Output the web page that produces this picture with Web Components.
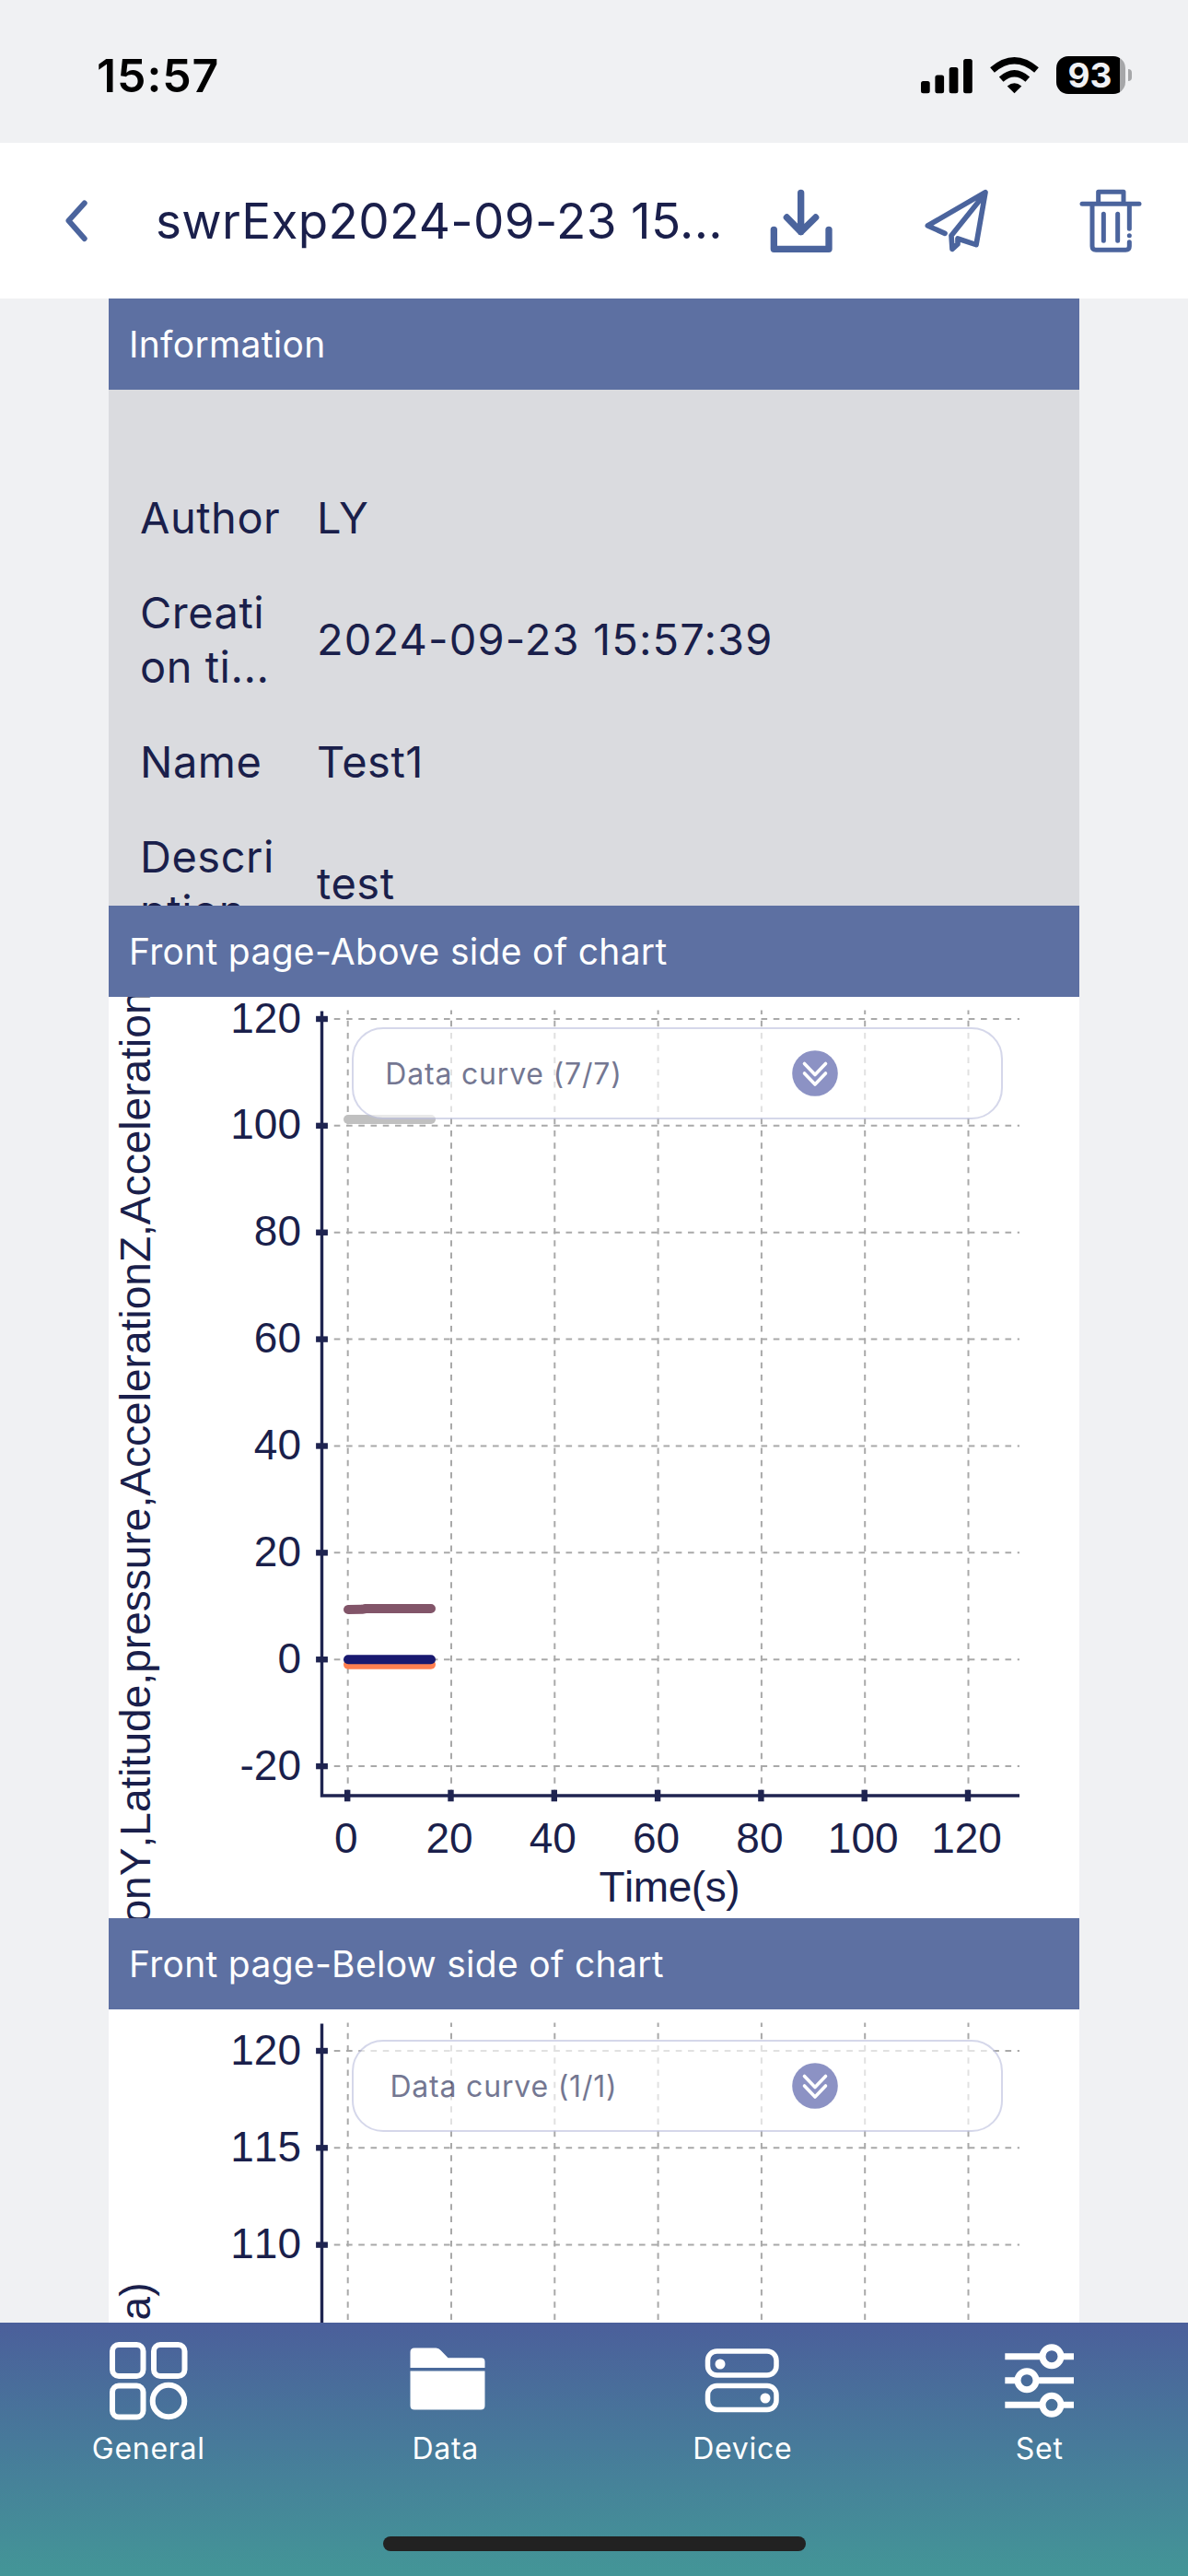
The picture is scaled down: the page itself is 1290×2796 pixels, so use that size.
<!DOCTYPE html>
<html lang="en">
<head>
<meta charset="utf-8">
<title>Experiment record</title>
<style>
  html, body {
    margin: 0;
    padding: 0;
  }
  body {
    width: 1290px;
    height: 2796px;
    overflow: hidden;
    display: flex;
    flex-direction: column;
    background: #f0f1f3;
    color: #1a1f4b;
    font-family: Inter, "Liberation Sans", sans-serif;
  }
  main {
    flex: 1;
    min-height: 0;
    overflow: hidden;
    padding: 0 118px;
  }
</style>
</head>
<body>
  <status-bar time="15:57" battery="93"></status-bar>
  <page-header>swrExp2024-09-23 15...</page-header>

  <main>
    <section-panel heading="Information" style="--body-height: 560px; --body-color: #dadbdf">
      <info-list>
        <info-row style="--value-spacing: -1px"><span slot="label">Author</span>LY</info-row>
        <info-row style="--value-spacing: 1.1px"><span slot="label">Creati<br>on ti...</span>2024-09-23 15:57:39</info-row>
        <info-row><span slot="label">Name</span>Test1</info-row>
        <info-row><span slot="label">Descri<br>ption</span>test</info-row>
      </info-list>
    </section-panel>

    <section-panel heading="Front page-Above side of chart">
      <data-chart id="above">
        <curve-legend>Data curve (7/7)</curve-legend>
      </data-chart>
    </section-panel>

    <section-panel heading="Front page-Below side of chart">
      <data-chart id="below">
        <curve-legend>Data curve (1/1)</curve-legend>
      </data-chart>
    </section-panel>
  </main>

  <tab-bar>
    <tab-item label="General">
      <svg width="86" height="86" viewBox="0 0 86 86" fill="none" stroke="#fff" stroke-width="6">
        <rect x="4" y="4" width="33.5" height="34" rx="7"/>
        <rect x="49" y="4" width="33.5" height="34" rx="7"/>
        <rect x="4" y="48.5" width="33.5" height="34" rx="7"/>
        <circle cx="65" cy="65" r="17.3"/>
      </svg>
    </tab-item>
    <tab-item label="Data">
      <svg width="86" height="86" viewBox="0 0 86 86" fill="#fff">
        <path d="M4.500 29V12Q4.500 7.500 9 7.500H32.500Q35.500 7.500 37.500 10L45.500 18.300H81.500Q85.500 18.300 85.500 22.500V29Z"/>
        <path d="M4.500 32.500H85.500V70Q85.500 74.500 81 74.500H9Q4.500 74.500 4.500 70Z"/>
      </svg>
    </tab-item>
    <tab-item label="Device">
      <svg width="86" height="86" viewBox="0 0 86 86" fill="none" stroke="#fff" stroke-width="5.500">
        <rect x="5.500" y="11" width="74.500" height="26" rx="10"/>
        <rect x="5.500" y="48.500" width="74.500" height="26" rx="10"/>
        <circle cx="19" cy="25" r="5.500" fill="#fff" stroke="none"/>
        <circle cx="68" cy="62" r="5.500" fill="#fff" stroke="none"/>
      </svg>
    </tab-item>
    <tab-item label="Set">
      <svg width="86" height="86" viewBox="0 0 86 86" fill="none" stroke="#fff" stroke-width="7">
        <path d="M5.300 16.700H46M66 16.700H80M5.300 42.700H19M39 42.700H80M5.300 69.300H46M66 69.300H80"/>
        <circle cx="56" cy="16.700" r="10"/>
        <circle cx="29" cy="42.700" r="10"/>
        <circle cx="56" cy="69.300" r="10"/>
      </svg>
    </tab-item>
  </tab-bar>

<script>
"use strict";

// Attach an open shadow root filled from an HTML string
function render(host, html) {
  const shadow = host.attachShadow({ mode: 'open' });
  const template = document.createElement('template');
  template.innerHTML = html;
  shadow.appendChild(template.content.cloneNode(true));
  return shadow;
}

class StatusBar extends HTMLElement {
  connectedCallback() {
    render(this, `
      <style>
        :host {
          display: flex;
          flex: none;
          justify-content: space-between;
          align-items: flex-start;
          box-sizing: border-box;
          height: 155px;
          padding: 52px 61px 0 105px;
          color: #000;
        }
        .time {
          font-size: 50px;
          line-height: 61px;
          font-weight: 600;
          letter-spacing: 0.900px;
        }
        .icons { display: flex; align-items: center; gap: 19px; height: 59px; }
        .battery { display: flex; align-items: center; gap: 3px; }
        .level {
          width: 75px;
          height: 41.500px;
          border-radius: 13px;
          background: linear-gradient(90deg, #000 92%, #a6a7a9 92%);
          color: #f0f1f4;
          font-size: 37px;
          font-weight: 700;
          line-height: 41px;
          text-align: center;
          text-indent: -1px;
        }
        .cap {
          width: 4.500px;
          height: 13px;
          border-radius: 0 5px 5px 0;
          background: #a6a7a9;
        }
      </style>
      <div class="time">${this.getAttribute('time')}</div>
      <div class="icons">
        <svg width="56" height="40" viewBox="0 0 56 40">
          <rect x="0" y="26" width="9.700" height="13.300" rx="2.500"/>
          <rect x="15.400" y="19.500" width="9.700" height="19.800" rx="2.500"/>
          <rect x="30.700" y="11" width="9.700" height="28.300" rx="2.500"/>
          <rect x="46.100" y="2" width="9.700" height="37.300" rx="2.500"/>
        </svg>
        <svg width="53" height="40" viewBox="0 0 53 40">
          <path d="M26.500 39.300L18.700 31.500Q26.500 25 34.300 31.500Z"/>
          <path d="M12.200 24.200Q26.500 11.300 40.800 24.200" fill="none" stroke="#000" stroke-width="7"/>
          <path d="M2.500 14Q26.500 -6.500 50.500 14" fill="none" stroke="#000" stroke-width="7.200"/>
        </svg>
        <div class="battery">
          <div class="level">${this.getAttribute('battery')}</div>
          <div class="cap"></div>
        </div>
      </div>
    `);
  }
}

class PageHeader extends HTMLElement {
  connectedCallback() {
    render(this, `
      <style>
        :host {
          display: flex;
          flex: none;
          align-items: center;
          box-sizing: border-box;
          height: 169px;
          padding: 0 50px 0 69.500px;
          background: #fff;
        }
        .title {
          flex: 1;
          padding-left: 73.500px;
          font-size: 53px;
          line-height: 64px;
          letter-spacing: 0.350px;
          white-space: nowrap;
        }
        svg { flex: none; fill: none; stroke: #4b649d; stroke-linecap: round; stroke-linejoin: round; }
        .actions { display: flex; gap: 99.500px; align-items: center; }
      </style>
      <svg width="26" height="46" viewBox="0 0 26 46" stroke-width="6">
        <path d="M21.700 3.500L4.500 22.500L21.700 42"/>
      </svg>
      <div class="title"><slot></slot></div>
      <div class="actions">
        <svg width="68" height="70" viewBox="169 74 204 210" stroke-width="22">
          <path d="M270 87V214M224 167L270 214L318 167M182 207V270H361V207"/>
        </svg>
        <svg width="69" height="70" viewBox="672 74 207 210" stroke-width="17">
          <path d="M738 219L682 194L870 85L840 256L780 236V254L762 270L759 226L860 100"/>
        </svg>
        <svg width="68" height="70" viewBox="1175 74 204 210" stroke-width="15">
          <path d="M1184 123H1370M1237 120V84H1319V120M1254 156V243M1300 156V243"/>
          <path d="M1338 126V204M1338 226V226.100M1338 247V261Q1338 273 1326 273H1229Q1217 273 1217 261V126"/>
        </svg>
      </div>
    `);
  }
}

class SectionPanel extends HTMLElement {
  connectedCallback() {
    render(this, `
      <style>
        :host { display: block; }
        h2 {
          margin: 0;
          height: 99px;
          padding-left: 22px;
          background: #5d70a2;
          color: #fff;
          font-size: 39px;
          font-weight: 400;
          line-height: 99px;
          letter-spacing: 0.300px;
        }
        .body {
          height: var(--body-height, 1000px);
          background: var(--body-color, #fff);
          overflow: hidden;
        }
      </style>
      <h2>${this.getAttribute('heading')}</h2>
      <div class="body"><slot></slot></div>
    `);
  }
}

class InfoList extends HTMLElement {
  connectedCallback() {
    render(this, `
      <style>
        :host { display: flex; flex-direction: column; padding: 72px 34px 0; }
      </style>
      <slot></slot>
    `);
  }
}

class InfoRow extends HTMLElement {
  connectedCallback() {
    render(this, `
      <style>
        :host {
          display: grid;
          grid-template-columns: 192px 1fr;
          align-items: center;
          height: 132.500px;
          font-size: 47px;
          line-height: 59px;
          white-space: nowrap;
        }
        .label { letter-spacing: 0.500px; }
        .value { letter-spacing: var(--value-spacing, 0.500px); }
      </style>
      <div class="label"><slot name="label"></slot></div>
      <div class="value"><slot></slot></div>
    `);
  }
}

class CurveLegend extends HTMLElement {
  connectedCallback() {
    render(this, `
      <style>
        /* floats over the plot area */
        :host {
          position: absolute;
          left: 264px;
          top: 33px;
          display: grid;
          grid-template-columns: 326px 1fr;
          align-items: center;
          box-sizing: border-box;
          width: 707px;
          height: 100px;
          border: 2px solid #bfc3e0;
          border-radius: 34px;
          background: #fff;
          opacity: 0.65;
        }
        .text {
          padding-top: 2px;
          text-align: center;
          font-size: 32px;
          line-height: 40px;
          letter-spacing: 0.800px;
          color: #2a2f58;
          white-space: nowrap;
        }
        svg { display: block; justify-self: start; margin-left: 150px; }
      </style>
      <div class="text"><slot></slot></div>
      <svg width="50" height="50" viewBox="0 0 50 50">
        <circle cx="25" cy="25" r="24.800" fill="#5059a5"/>
        <path d="M13.500 14.500L25 26.500L36.500 14.500M13.500 25L25 37L36.500 25" fill="none" stroke="#fff"
          stroke-width="3.600" stroke-linecap="round" stroke-linejoin="round"/>
      </svg>
    `);
  }
}

const charts = {
  above: {
    yLabel: 'onY,Latitude,pressure,AccelerationZ,Acceleration',
    yLabelStart: 1005.5,
    yLabelLength: 1012,
    yTicks: [120, 100, 80, 60, 40, 20, 0, -20],
    yTop: 24,
    yStep: 115.87,
    series: [
      { color: '#c0c0c0', d: 'M260 133H350' },
      { color: '#825569', d: 'M260 665L275 664.800L279 664H350' },
      { color: '#ff7f50', d: 'M260 724.800H350' },
      { color: '#191970', d: 'M260 719.300H350' }
    ]
  },
  below: {
    yLabel: 'a)',
    yLabelStart: 337.5,
    yLabelLength: 41,
    yTicks: [120, 115, 110],
    yTop: 45,
    yStep: 105.3,
    series: []
  }
};

class DataChart extends HTMLElement {
  connectedCallback() {
    const chart = charts[this.id];
    const left = 231.5;
    const bottom = 867;
    const right = 989;
    const xTicks = [0, 20, 40, 60, 80, 100, 120];
    const xPos = i => 259.7 + i * 112.3;
    const yPos = i => chart.yTop + i * chart.yStep;

    let grid = '';
    let ticks = '';
    let labels = '';
    xTicks.forEach((value, i) => {
      const x = xPos(i);
      grid += `<path d="M${x} ${bottom}V14.500"/>`;
      ticks += `<rect x="${x - 3.7}" y="${bottom - 6.3}" width="6.400" height="12.600"/>`;
      labels += `<text x="${x - 2}" y="929" text-anchor="middle">${value}</text>`;
    });
    chart.yTicks.forEach((value, i) => {
      const y = yPos(i);
      grid += `<path d="M${left} ${y}H${right}"/>`;
      ticks += `<rect x="${left - 6.4}" y="${y - 3.2}" width="12.800" height="6.400"/>`;
      labels += `<text x="209" y="${y + 14.5}" text-anchor="end">${value}</text>`;
    });

    render(this, `
      <style>
        :host { display: block; position: relative; height: 1000px; }
        svg { display: block; }
        text {
          font-family: "Liberation Sans", Arial, sans-serif;
          font-size: 46px;
          font-kerning: none;
          fill: #1a1f4b;
        }
        .grid { stroke: #a9a9a9; stroke-width: 2; stroke-dasharray: 6.625; }
        .axis { stroke: #1f2450; stroke-width: 3.400; fill: none; }
        .ticks { fill: #1f2450; }
        .series { fill: none; stroke-width: 10; stroke-linecap: round; stroke-linejoin: round; }
      </style>
      <svg width="1054" height="1000" viewBox="0 0 1054 1000">
        <g class="grid">${grid}</g>
        <path class="axis" d="M${left} 15.500V${bottom}H${right}"/>
        <g class="ticks">${ticks}</g>
        <g class="series">
          ${chart.series.map(s => `<path d="${s.d}" stroke="${s.color}"/>`).join('')}
        </g>
        ${labels}
        <text x="609" y="982" text-anchor="middle" textLength="153">Time(s)</text>
        <text transform="translate(45 ${chart.yLabelStart}) rotate(-90)"
          textLength="${chart.yLabelLength}">${chart.yLabel}</text>
      </svg>
      <slot></slot>
    `);
  }
}

class TabBar extends HTMLElement {
  connectedCallback() {
    render(this, `
      <style>
        :host {
          display: flex;
          flex: none;
          flex-direction: column;
          align-items: center;
          justify-content: space-between;
          box-sizing: border-box;
          height: 275px;
          padding: 20px 0 27px;
          background: linear-gradient(#4b5f9b, #477a9a 48%, #439697);
          color: #fff;
        }
        nav { display: grid; grid-template-columns: repeat(4, 1fr); width: 100%; }
        .home { width: 459px; height: 16px; border-radius: 8px; background: #222; }
      </style>
      <nav><slot></slot></nav>
      <div class="home"></div>
    `);
  }
}

class TabItem extends HTMLElement {
  connectedCallback() {
    render(this, `
      <style>
        :host {
          display: flex;
          flex-direction: column;
          align-items: center;
          gap: 11px;
          font-size: 32px;
          line-height: 40px;
          letter-spacing: 0.700px;
        }
      </style>
      <slot></slot>
      <div>${this.getAttribute('label')}</div>
    `);
  }
}

customElements.define('status-bar', StatusBar);
customElements.define('page-header', PageHeader);
customElements.define('section-panel', SectionPanel);
customElements.define('info-list', InfoList);
customElements.define('info-row', InfoRow);
customElements.define('curve-legend', CurveLegend);
customElements.define('data-chart', DataChart);
customElements.define('tab-bar', TabBar);
customElements.define('tab-item', TabItem);
</script>
</body>
</html>
